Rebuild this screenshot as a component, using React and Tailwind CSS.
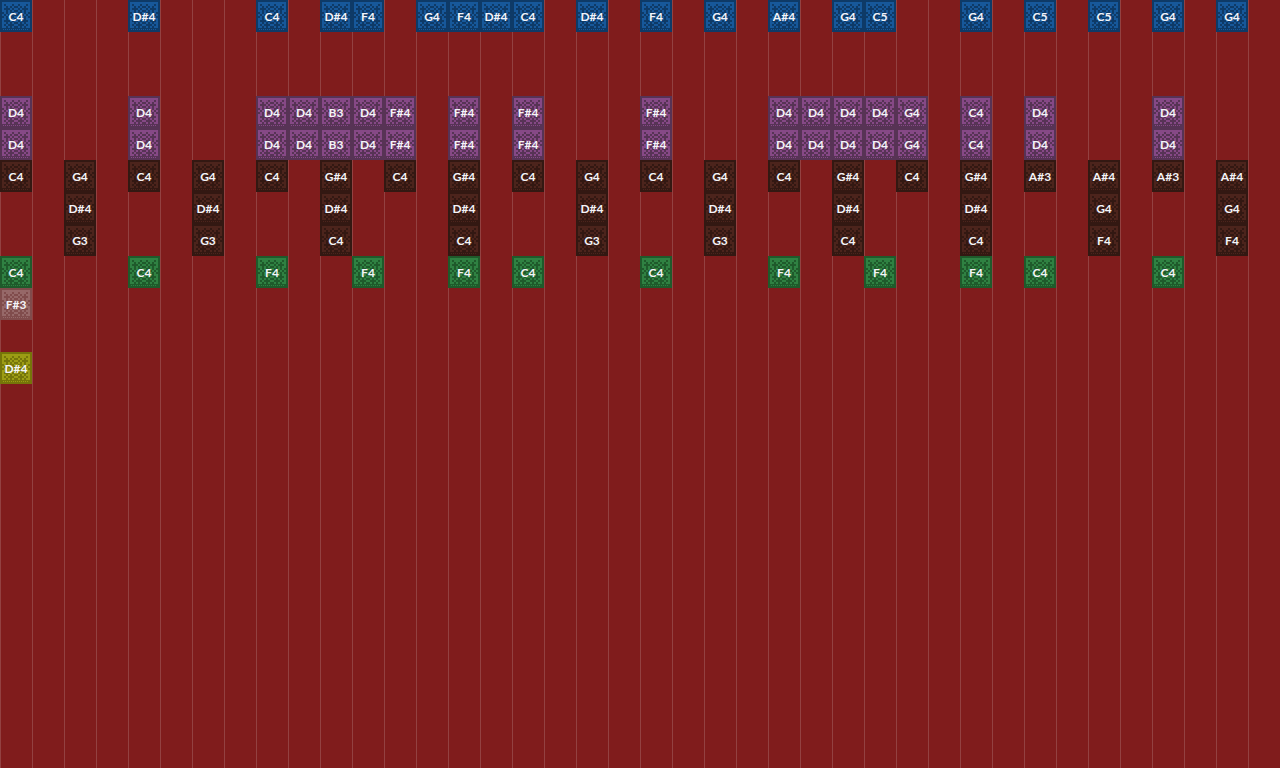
const TEXTURE = [
  "................",
  ".##############.",
  ".#.###.##.###.#.",
  ".##.#.#..#.#.##.",
  ".#...#.##.#...#.",
  ".##.#.#..#.#.##.",
  "..#.#..##..#.#..",
  ".#.#.#....#.#.#.",
  "..#.#..##..#.#..",
  ".##.#.#..#.#.##.",
  ".#...#.##.#...#.",
  ".##.#.#..#.#.##.",
  ".#.#...##...#.#.",
  ".##.#.#..#.#.##.",
  "................",
  "................",
];
const LIGHT = TEXTURE.map((r, y) => [...r].map((c, x) => (c === "#" ? `M${x} ${y}h1v1h-1z` : "")).join("")).join("");
const DOTS = Array.from({ length: 13 }, (_, i) => `M${i + 1.5} 14.5h.5v.5h-.5z`).join("");

const TONES = {
  blue: ["fill-[#0e3a67]", "fill-[#17589a]"],
  purple: ["fill-[#573355]", "fill-[#864986]"],
  brown: ["fill-[#331812]", "fill-[#4c241c]"],
  green: ["fill-[#1f5a2b]", "fill-[#2f8142]"],
  rose: ["fill-[#804c4c]", "fill-[#966868]"],
  yellow: ["fill-[#757509]", "fill-[#9c9c14]"],
};

const ROWS = [
  ["blue", "0:C4 4:D#4 8:C4 10:D#4 11:F4 13:G4 14:F4 15:D#4 16:C4 18:D#4 20:F4 22:G4 24:A#4 26:G4 27:C5 30:G4 32:C5 34:C5 36:G4 38:G4"],
  ["blue", ""],
  ["blue", ""],
  ["purple", "0:D4 4:D4 8:D4 9:D4 10:B3 11:D4 12:F#4 14:F#4 16:F#4 20:F#4 24:D4 25:D4 26:D4 27:D4 28:G4 30:C4 32:D4 36:D4"],
  ["purple", "0:D4 4:D4 8:D4 9:D4 10:B3 11:D4 12:F#4 14:F#4 16:F#4 20:F#4 24:D4 25:D4 26:D4 27:D4 28:G4 30:C4 32:D4 36:D4"],
  ["brown", "0:C4 2:G4 4:C4 6:G4 8:C4 10:G#4 12:C4 14:G#4 16:C4 18:G4 20:C4 22:G4 24:C4 26:G#4 28:C4 30:G#4 32:A#3 34:A#4 36:A#3 38:A#4"],
  ["brown", "2:D#4 6:D#4 10:D#4 14:D#4 18:D#4 22:D#4 26:D#4 30:D#4 34:G4 38:G4"],
  ["brown", "2:G3 6:G3 10:C4 14:C4 18:G3 22:G3 26:C4 30:C4 34:F4 38:F4"],
  ["green", "0:C4 4:C4 8:F4 11:F4 14:F4 16:C4 20:C4 24:F4 27:F4 30:F4 32:C4 36:C4"],
  ["rose", "0:F#3"],
  ["rose", ""],
  ["yellow", "0:D#4"],
].map(([tone, notes]) => ({
  tone,
  notes: Object.fromEntries(notes.split(" ").filter(Boolean).map((n) => n.split(":"))),
}));

const COLUMNS = Array.from({ length: 40 }, (_, i) => i);

function Note({ tone, label }) {
  const [dark, light] = TONES[tone];
  return (
    <div className="grid size-8 place-items-center">
      <svg viewBox="0 0 16 16" shapeRendering="crispEdges" aria-hidden="true" className="col-start-1 row-start-1 size-8">
        <path className={dark} d="M0 0h16v16H0z" />
        <path className={light} d={LIGHT} />
        <path className={light} d={DOTS} />
      </svg>
      <span className="z-10 col-start-1 row-start-1 pt-0.5 text-[12px] leading-5 font-bold text-[#f4f4f8]">{label}</span>
    </div>
  );
}

export default function App() {
  return (
    <main className="flex min-h-screen overflow-hidden bg-[#801c1c] font-['Lato',sans-serif]">
      {COLUMNS.map((column) => (
        <div key={column} className="w-8 shrink-0 bg-linear-to-r from-[#934141] from-[1px] to-transparent to-[1px]">
          {ROWS.map(({ tone, notes }, row) => (
            <div key={row} className="h-8">
              {notes[column] && <Note tone={tone} label={notes[column]} />}
            </div>
          ))}
        </div>
      ))}
    </main>
  );
}
